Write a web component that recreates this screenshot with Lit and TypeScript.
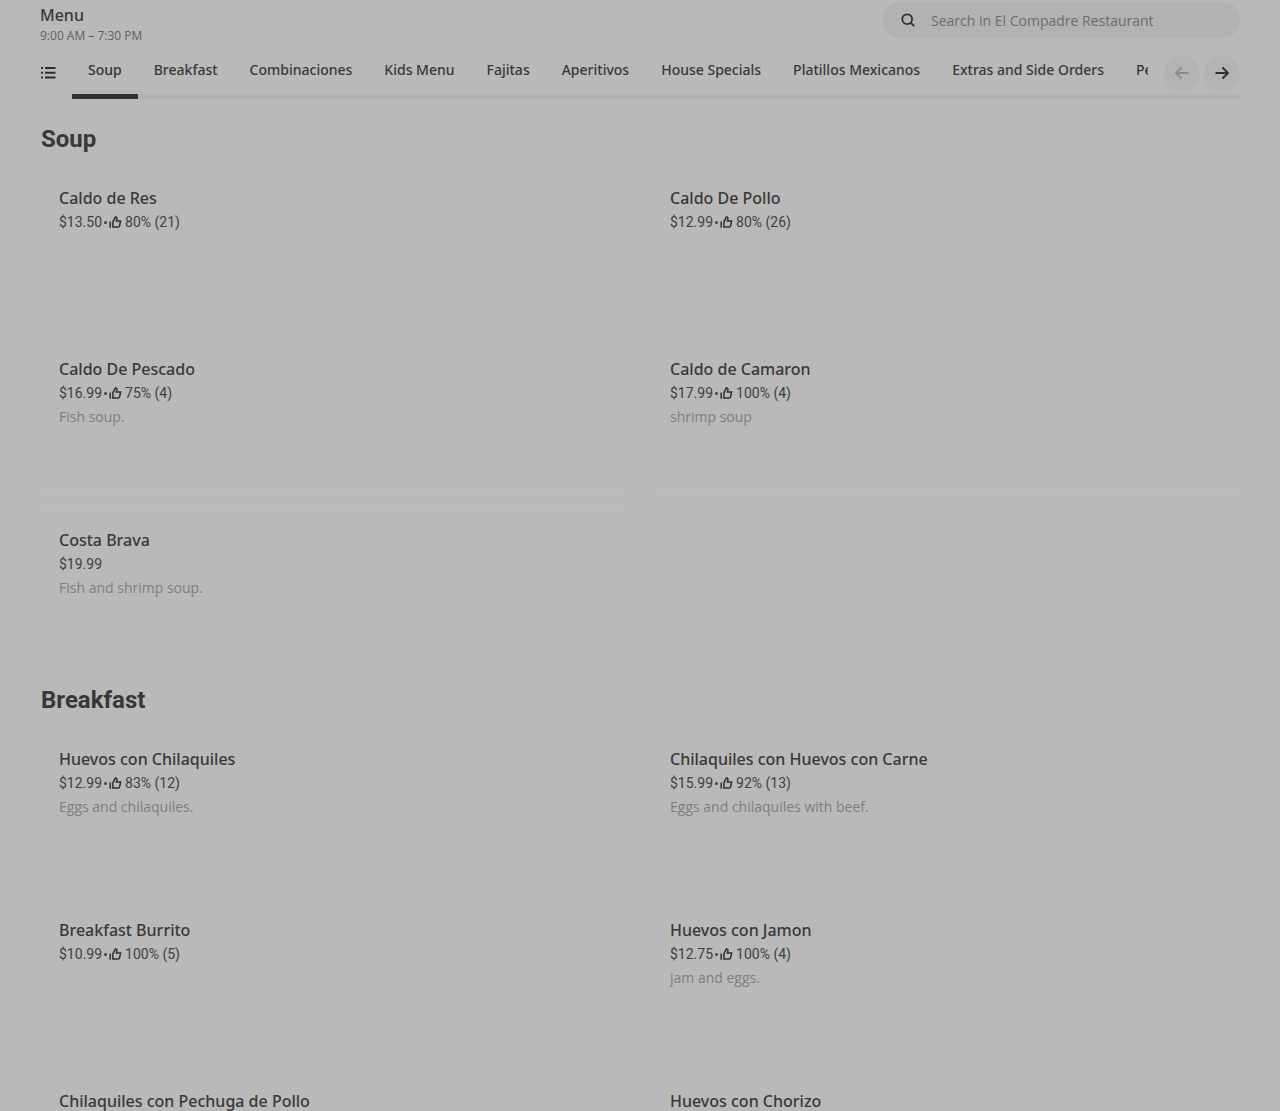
import { LitElement, html, css, svg, nothing } from "lit";
import { customElement, property, state } from "lit/decorators.js";
import { classMap } from "lit/directives/class-map.js";

interface Dish {
  name: string;
  price?: string;
  rating?: string;
  note?: string;
}

interface Section {
  title: string;
  dishes: Dish[];
}

const TABS = [
  "Soup",
  "Breakfast",
  "Combinaciones",
  "Kids Menu",
  "Fajitas",
  "Aperitivos",
  "House Specials",
  "Platillos Mexicanos",
  "Extras and Side Orders",
  "Pescados",
];

const SECTIONS: Section[] = [
  {
    title: "Soup",
    dishes: [
      { name: "Caldo de Res", price: "$13.50", rating: "80% (21)" },
      { name: "Caldo De Pollo", price: "$12.99", rating: "80% (26)" },
      { name: "Caldo De Pescado", price: "$16.99", rating: "75% (4)", note: "Fish soup." },
      { name: "Caldo de Camaron", price: "$17.99", rating: "100% (4)", note: "shrimp soup" },
      { name: "Costa Brava", price: "$19.99", note: "Fish and shrimp soup." },
    ],
  },
  {
    title: "Breakfast",
    dishes: [
      { name: "Huevos con Chilaquiles", price: "$12.99", rating: "83% (12)", note: "Eggs and chilaquiles." },
      { name: "Chilaquiles con Huevos con Carne", price: "$15.99", rating: "92% (13)", note: "Eggs and chilaquiles with beef." },
      { name: "Breakfast Burrito", price: "$10.99", rating: "100% (5)" },
      { name: "Huevos con Jamon", price: "$12.75", rating: "100% (4)", note: "jam and eggs." },
      { name: "Chilaquiles con Pechuga de Pollo" },
      { name: "Huevos con Chorizo" },
    ],
  },
];

const arrow = (d: string) => html`
  <svg width="16" height="16" viewBox="0 0 16 16" fill="none" stroke="currentColor" stroke-width="1.8" aria-hidden="true">
    ${svg`<path d=${d} />`}
  </svg>
`;

@customElement("dish-card")
export class DishCard extends LitElement {
  @property({ attribute: false }) dish!: Dish;

  static styles = css`
    :host {
      display: block;
    }
    .card {
      display: block;
      box-sizing: border-box;
      min-height: 147px;
      padding: 15px 17px;
      border: 1px solid #b6b6b6;
      border-radius: 4px;
      box-shadow: 0 0 0 2px #bbbbbb;
      color: #383838;
      text-decoration: none;
    }
    .name {
      margin: 0;
      font-family: "Noto Sans", sans-serif;
      font-size: 16px;
      line-height: 24px;
      font-weight: 500;
    }
    .meta {
      display: flex;
      align-items: center;
      gap: 2px;
      font-size: 14px;
      line-height: 24px;
      color: #404040;
    }
    .dot {
      width: 3px;
      height: 3px;
      border-radius: 2px;
      background: #434343;
    }
    .rating {
      padding-left: 1px;
    }
    .note {
      margin: 0;
      font-family: "Open Sans", sans-serif;
      font-size: 14px;
      line-height: 24px;
      color: #7e7e7e;
    }
  `;

  render() {
    const d = this.dish;
    return html`
      <a class="card" href="#">
        <h3 class="name">${d.name}</h3>
        ${d.price
          ? html`<div class="meta">
              <span>${d.price}</span>
              ${d.rating
                ? html`<span class="dot"></span>
                    <svg width="13" height="13" viewBox="0 0 13 13" fill="none" stroke="#303030" stroke-width="1.5" aria-hidden="true">
                      <path d="M1.2 5.500v6.300M3.900 11V5.800L6.500 .9c1.300 .1 1.700 1.100 1.400 2.100L7.400 4.900h4.200l-1 4.900c-.2.8-.6 1.200-1.400 1.200z" />
                    </svg>
                    <span class="rating">${d.rating}</span>`
                : nothing}
            </div>`
          : nothing}
        ${d.note ? html`<p class="note">${d.note}</p>` : nothing}
      </a>
    `;
  }
}

@customElement("app-root")
export class AppRoot extends LitElement {
  @state() private active = 0;

  static styles = css`
    :host {
      display: block;
      min-height: 100vh;
      background: #b9b9b9;
      color: #383838;
      font-family: Roboto, "Liberation Sans", sans-serif;
    }
    .top {
      display: flex;
      justify-content: space-between;
      padding: 2px 40px 0;
    }
    .menu {
      margin: 0;
      padding-top: 2px;
      font-family: "Noto Sans", sans-serif;
      font-size: 16px;
      line-height: 22px;
      font-weight: 500;
    }
    .hours {
      margin: 0;
      font-family: "Open Sans", sans-serif;
      font-size: 12px;
      line-height: 20px;
      color: #606060;
    }
    .search {
      display: flex;
      align-items: center;
      box-sizing: border-box;
      gap: 16px;
      width: 357px;
      height: 36px;
      padding: 0 18px;
      border-radius: 18px;
      background: #b2b2b2;
    }
    .search svg {
      flex: none;
    }
    .query {
      flex: 1;
      min-width: 0;
      padding: 0;
      border: 0;
      outline: 0;
      background: none;
      font-family: "Open Sans", sans-serif;
      font-size: 14px;
      color: #383838;
    }
    .query::placeholder {
      color: #6c6c6c;
      opacity: 1;
    }
    .nav {
      display: grid;
      grid-template-columns: 32px minmax(0, 1fr) auto;
      margin: 7px 40px 0;
    }
    .list,
    .step {
      display: flex;
      align-items: center;
      padding: 0;
      border: 0;
      background: none;
      color: #2e2e2e;
    }
    .list {
      height: 36px;
      margin-top: 2px;
    }
    .tabs {
      display: flex;
      overflow: hidden;
    }
    .tab {
      flex: none;
      padding: 0 16px 8px;
      border: 0;
      background: none;
      font-family: "Noto Sans", sans-serif;
      font-size: 14px;
      line-height: 33px;
      font-weight: 500;
      color: #383838;
    }
    .tab.on {
      color: #333333;
    }
    .steps {
      display: flex;
      gap: 4px;
      padding: 2px 0 3px 16px;
    }
    .step {
      justify-content: center;
      width: 36px;
      height: 36px;
      border-radius: 18px;
      background: #b3b3b3;
    }
    .step:disabled {
      color: #8c8c8c;
    }
    .rail {
      grid-column: 2 / 4;
      grid-row: 2;
      height: 5px;
      background: #b2b2b2;
    }
    .bar {
      grid-column: 2;
      grid-row: 2;
      display: flex;
      overflow: hidden;
      height: 5px;
    }
    .mark {
      flex: none;
      width: 66px;
      height: 5px;
      background: #333333;
    }
    .section {
      padding: 0 41px 1px;
    }
    .title {
      margin: 0;
      padding: 24px 0 15px;
      font-size: 24px;
      line-height: 32px;
      font-weight: 700;
    }
    .grid {
      display: grid;
      grid-template-columns: repeat(2, minmax(0, 1fr));
      gap: 24px;
    }
  `;

  render() {
    return html`
      <header class="top">
        <div>
          <h1 class="menu">Menu</h1>
          <p class="hours">9:00 AM – 7:30 PM</p>
        </div>
        <label class="search">
          <svg width="14" height="14" viewBox="0 0 14 14" fill="none" stroke="#2e2e2e" stroke-width="1.8" aria-hidden="true">
            <circle cx="6.2" cy="6.2" r="4.9" />
            <path d="M9.6 9.6l3.6 3.6" />
          </svg>
          <input class="query" type="search" placeholder="Search in El Compadre Restaurant" aria-label="Search in El Compadre Restaurant" />
        </label>
      </header>
      <nav class="nav">
        <button class="list" aria-label="Menu">
          <svg width="16" height="16" viewBox="0 0 16 16" fill="currentColor" aria-hidden="true">
            <path d="M1 2h2v2H1zM5 2h10.500v2H5zM1 6.800h2v2H1zM5 6.800h10.500v2H5zM1 11.600h2v2H1zM5 11.600h10.500v2H5z" />
          </svg>
        </button>
        <div class="tabs">
          ${TABS.map(
            (t, i) => html`<button class=${classMap({ tab: true, on: i === this.active })} @click=${() => (this.active = i)}>${t}</button>`
          )}
        </div>
        <div class="steps">
          <button class="step" disabled aria-label="Previous">${arrow("M14.5 8H2M7.5 2.5L2 8l5.500 5.500")}</button>
          <button class="step" aria-label="Next">${arrow("M1.500 8H14M8.500 2.500L14 8l-5.500 5.500")}</button>
        </div>
        <div class="rail"></div>
        <div class="bar"><span class="mark"></span></div>
      </nav>
      <main>
        ${SECTIONS.map(
          (s) => html`
            <section class="section">
              <h2 class="title">${s.title}</h2>
              <div class="grid">${s.dishes.map((d) => html`<dish-card .dish=${d}></dish-card>`)}</div>
            </section>
          `
        )}
      </main>
    `;
  }
}
